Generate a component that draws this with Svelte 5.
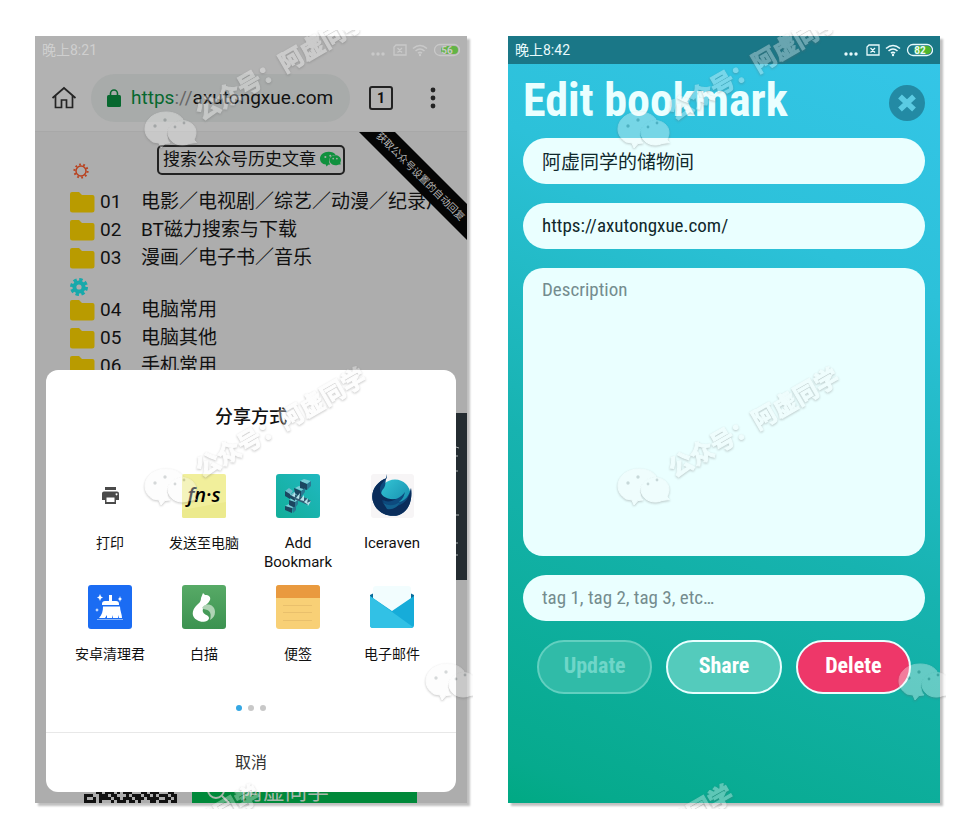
<script>
  const topFolders = [
    { no: '01', name: '电影／电视剧／综艺／动漫／纪录片' },
    { no: '02', name: 'BT磁力搜索与下载' },
    { no: '03', name: '漫画／电子书／音乐' }
  ];
  const moreFolders = [
    { no: '04', name: '电脑常用' },
    { no: '05', name: '电脑其他' },
    { no: '06', name: '手机常用' }
  ];
  const apps = [
    { id: 'print', label: '打印' },
    { id: 'fns', label: '发送至电脑' },
    { id: 'add', label: 'Add Bookmark', latin: true },
    { id: 'raven', label: 'Iceraven', latin: true },
    { id: 'clean', label: '安卓清理君' },
    { id: 'baimiao', label: '白描' },
    { id: 'notes', label: '便签' },
    { id: 'mail', label: '电子邮件' }
  ];

  const qrRows = [
    '0110111011011001110101110110110',
    '1111001000111101101011001111011',
    '0000110111010111000110111000110',
    '1110011101100010111011010111011',
    '1001011110110111011101111001101',
    '1111010001011101101000110111011'
  ];
  const modules = qrRows.flatMap((row, y) =>
    [...row].map((v, x) => ({ v, x: x * 3, y: y * 3 })).filter((m) => m.v === '1')
  );

  const marks = [
    { x: 116, y: 82 },
    { x: 116, y: 439 },
    { x: 397, y: 634 },
    { x: 10, y: 856 }
  ];

  let title = $state('阿虚同学的储物间');
  let url = $state('https://axutongxue.com/');
  let description = $state('');
  let tags = $state('');
</script>

{#snippet folder(item)}
  <li>
    <a class="folder" href="#folder-{item.no}">
      <svg width="25" height="21" viewBox="0 0 25 21" aria-hidden="true">
        <path d="M2 0h7l3 3h10.500a2 2 0 0 1 2 2v13a2.500 2.500 0 0 1-2.500 2.500H2.500A2.500 2.500 0 0 1 0 18V2a2 2 0 0 1 2-2z" fill="#b99b00" />
      </svg>
      <span class="no">{item.no}</span>
      <span class="name">{item.name}</span>
    </a>
  </li>
{/snippet}

{#snippet statusIcons(level)}
  <svg class="status-icons" width="89" height="14" viewBox="0 0 89 14" aria-hidden="true">
    <g fill="currentColor">
      <circle cx="2" cy="11" r="1.700" /><circle cx="7" cy="11" r="1.700" /><circle cx="12" cy="11" r="1.700" />
    </g>
    <g fill="none" stroke="currentColor" stroke-width="1.300">
      <path d="M25 2h10v10H23V4zM26.500 5l4.500 4.500M31 5l-4.500 4.500" />
      <path d="M42 5.500q7-6 14 0M44.500 8q4.500-4 9 0M47 10.200q2-1.800 4 0" stroke-width="1.600" />
      <rect x="63.500" y="1.500" width="25" height="11" rx="5.500" />
    </g>
    <rect x="70" y="3" width="17" height="8" rx="4" fill="#4fb52c" />
    <circle cx="49" cy="12" r="1.200" fill="currentColor" />
    <text x="76" y="10.500" text-anchor="middle" font-size="10" font-weight="700" fill="currentColor">{level}</text>
  </svg>
{/snippet}

{#snippet chatLogo()}
  <path d="M21 0C9 0 0 7.500 0 17c0 6 3.500 10 8 13l6 1 2 5 4-4.500 5-.5C19 25 21 9 38 7.500 35 3 29 0 21 0z" />
  <path d="M51 20.500c0-7-6.500-12-14-12S23 14 23 20.500 29 33 37 33c2.500 0 5-.5 7-1.500l7.500-1-2.500-2.500c1-2.500 2-4.500 2-7.500z" />
{/snippet}

{#snippet watermark()}
  <svg class="watermark" aria-hidden="true">
    <g class="stamp">
      {#each marks as m}
        <g transform="translate({m.x} {m.y})">
          {@render chatLogo()}
          <g fill="#8b9396" stroke="none">
            <circle cx="10" cy="14" r="1.700" /><circle cx="20" cy="8" r="1.700" />
            <circle cx="30" cy="15" r="1.400" /><circle cx="39" cy="11" r="1.400" />
          </g>
          <text x="57" y="9" transform="rotate(-30 57 9)">公众号：阿虚同学</text>
        </g>
      {/each}
    </g>
  </svg>
{/snippet}

{#snippet appIcon(id)}
  <svg width="44" height="44" viewBox="0 0 44 44" aria-hidden="true">
    {#if id === 'print'}
      <path d="M17 16h11v-3H17zM16 17.500h13a2 2 0 0 1 2 2v6.500h-3v4H17v-4h-3v-6.500a2 2 0 0 1 2-2zM18.500 23.500v4.500h8v-4.500zM28.500 19.300a1 1 0 1 0 .1 0z" fill="#4a4a4a" fill-rule="evenodd" />
    {:else if id === 'fns'}
      <rect width="44" height="44" rx="2" fill="#f1ef9b" />
      <path d="M0 36l44-8v14a2 2 0 0 1-2 2H2a2 2 0 0 1-2-2z" fill="#ecea8d" />
      <text x="22" y="28" text-anchor="middle" class="hand">fn·s</text>
    {:else if id === 'add'}
      <defs><linearGradient id="teal" x1="0" y1="1" x2="1" y2="0"><stop stop-color="#12ae99" /><stop offset="1" stop-color="#20b8c0" /></linearGradient></defs>
      <rect width="44" height="44" rx="3" fill="url(#teal)" />
      <path d="M24 7l4-2 7 2-4 3zM19 14l4-2 6 2-3 3zM13 26l4-2 6 2-4 3zM9 32l4-2 6 2-3 3z" fill="#79cdd6" />
      <path d="M24 7l7 3v6l-7-2zM18 14l7 3v6l-6-3zM13 26l6 2v6l-6-3zM9 32l7 2v5l-7-3z" fill="#1b4660" />
      <path d="M31 10l4-3v5l-4 4zM25 17l4-3v4l-4 5zM16 34l4-2v4l-3 3zM19 28l3-2v4l-3 4z" fill="#2a7892" />
      <path d="M9 17l4-3 4 3-3 4zM14 21l4-3 3 3-3 4z" fill="#6fb9c8" />
      <path d="M9 17l5 3v5l-5-3zM14 21l5 2v4l-5-3z" fill="#1b4660" />
      <path d="M17 20l13 4 5 3-3 4-14-6z" fill="#315d75" />
      <path d="M16 22l3-4v5zM20 24l4-5-1 6zM24 26l4-5v6zM28 28l4-4-1 6zM31 29l4-2-3 5z" fill="#b5e5ec" />
    {:else if id === 'raven'}
      <defs><linearGradient id="ice" x1="0" y1="0" x2="1" y2="1"><stop stop-color="#35c7d6" /><stop offset="1" stop-color="#1184a7" /></linearGradient></defs>
      <rect x="1" width="43" height="44" rx="3" fill="#f7f5f6" />
      <circle cx="25" cy="21" r="15.500" fill="url(#ice)" />
      <path d="M17 4C5 8-1 20 4 30c4 9 15 14 25 11 8-3 14-12 12-27-2 8-6 13-12 14 4-3 5-6 6-10-4 6-10 8-20 9-5-3-5-9-1-13 2-3 1-6 3-14z" fill="#0d4a7e" />
      <path d="M17 4C5 8-1 20 4 30c4 9 15 14 25 11 8-3 14-12 12-27-1 9-6 16-14 18-8 2-12-2-15-6 4 2 10 2 14-1-9 1-16-3-16-10 0-4 3-7 7-11z" fill="#0a2d5b" />
      <path d="M12 27c5 6 12 5 18 1-2 5-7 8-13 7z" fill="#12608f" />
    {:else if id === 'clean'}
      <rect width="44" height="44" rx="3" fill="#1b6cf3" />
      <path d="M21 10h3v6h4q3 0 3 3v1H14v-1q0-3 3-3h4zM15 21.500h17c0 4 2 8 2 11.500h-3l-1-3v3h-5l-1-3v3h-5v-3l-2 3h-6c3-3 4-7 4-11.500zM12 9l1 2.500 2 1-2 1-1 2.500-1-2.500-2-1 2-1zM32 11l.6 2 1.400 1-1.400 1-.6 2-.6-2-1.400-1 1.400-1zM9 23l.6 1.400 1.400.6-1.400.6L9 27l-.6-1.400L7 25l1.400-.6z" fill="#fff" />
      <path d="M9 34.500h26" stroke="#8bb6fb" />
    {:else if id === 'baimiao'}
      <defs><linearGradient id="leaf" x1="0" y1="0" x2="0" y2="1"><stop stop-color="#57aa66" /><stop offset="1" stop-color="#3c9250" /></linearGradient></defs>
      <rect width="44" height="44" rx="3" fill="url(#leaf)" />
      <path d="M19 13l2-5 2 2c4 0 6 2 5 5-1 2-2 3-3 4-3 3-5 5-4 8 1 3 6 3 6 6 0 4-8 5-12 2-6-3-5-10-1-14 3-3 5-4 5-8z" fill="#fff" />
      <path d="M20 23c3-6 13-4 13 4 0 4-2 6-5 8 1-4 1-7-1-9s-5-1-7-3z" fill="#afd4b5" />
    {:else if id === 'notes'}
      <rect width="44" height="44" rx="3" fill="#f8d076" />
      <path d="M3 0h38a3 3 0 0 1 3 3v10H0V3a3 3 0 0 1 3-3z" fill="#e99a3f" />
      <path d="M7 20.500h29M7 27.500h29M7 35.500h29" stroke="#e9c06c" />
    {:else}
      <path d="M0 10l4-2h36l4 2v8H0z" fill="#096b9a" />
      <rect x="3" y="1" width="38" height="30" rx="3" fill="#f2fdfe" />
      <path d="M0 11l22 15L44 11v29a3 3 0 0 1-3 3H3a3 3 0 0 1-3-3z" fill="#16acd9" />
      <path d="M0 11l43 31-2 1H3a3 3 0 0 1-3-3z" fill="#32c1e5" />
    {/if}
  </svg>
{/snippet}

<main>
  <section class="phone" aria-label="分享方式">
    <div class="screen browser">
      <header>
        <div class="status dim"><span>晚上8:21</span>{@render statusIcons('56')}</div>
        <div class="toolbar">
          <button class="plain" aria-label="主页">
            <svg width="26" height="24" viewBox="0 0 26 24" fill="none" stroke="#242424" stroke-width="1.700"><path d="M1.500 12L13 2l11.500 10M4.500 10v11.500h6V14h5v7.500h6V10" /></svg>
          </button>
          <button class="address">
            <svg width="14" height="18" viewBox="0 0 14 18" aria-hidden="true"><rect y="6" width="14" height="12" rx="1.500" fill="#07682f" /><path d="M3.500 7V4.500a3.500 3.500 0 0 1 7 0V7" fill="none" stroke="#07682f" stroke-width="1.600" /></svg>
            <span><span class="secure">https</span><span class="slashes">://</span>axutongxue.com</span>
          </button>
          <button class="tabs" aria-label="标签页">1</button>
          <button class="plain kebab" aria-label="菜单">
            <svg width="6" height="22" viewBox="0 0 6 22" fill="#222"><circle cx="3" cy="3" r="2.400" /><circle cx="3" cy="11" r="2.400" /><circle cx="3" cy="19" r="2.400" /></svg>
          </button>
        </div>
      </header>

      <div class="page">
        <div class="page-head">
          <svg class="sun" width="16" height="16" viewBox="0 0 16 16" aria-hidden="true">
            <circle cx="8" cy="8" r="5" fill="none" stroke="#b9421f" stroke-width="1.500" />
            <circle cx="8" cy="8" r="6.600" fill="none" stroke="#b9421f" stroke-width="2" stroke-dasharray="1.800 2.346" />
          </svg>
          <a class="search" href="#search">
            搜索公众号历史文章
            <svg width="21" height="17" viewBox="0 0 51 38" aria-hidden="true">
              <g fill="#10913e">{@render chatLogo()}</g>
              <g fill="#adadad"><circle cx="13" cy="13" r="2.500" /><circle cx="25" cy="10" r="2.500" /><circle cx="32" cy="17" r="2" /><circle cx="41" cy="17" r="2" /></g>
            </svg>
          </a>
        </div>
        <ul>{#each topFolders as item}{@render folder(item)}{/each}</ul>
        <svg class="gear" width="18" height="18" viewBox="0 0 18 18" aria-hidden="true">
          <circle cx="9" cy="9" r="4.600" fill="none" stroke="#17a9ab" stroke-width="4" />
          <circle cx="9" cy="9" r="7.500" fill="none" stroke="#17a9ab" stroke-width="3" stroke-dasharray="3.400 2.490" />
        </svg>
        <ul>{#each moreFolders as item}{@render folder(item)}{/each}</ul>

        <a class="ribbon" href="#auto-reply">
          <svg width="108" height="108" viewBox="0 0 108 108">
            <path d="M0 0h36l72 72v36z" fill="#050505" />
            <text x="62" y="48" transform="rotate(45 62 44)" text-anchor="middle" font-size="10" fill="#b5b5b5">获取公众号设置的自动回复</text>
          </svg>
        </a>
      </div>

      <div class="page-foot">
        <svg width="93" height="18" viewBox="0 0 93 18" aria-hidden="true">
          {#each modules as m}<rect x={m.x} y={m.y} width="3" height="3" fill="#111" />{/each}
        </svg>
        <div class="promo">
          <svg width="24" height="24" viewBox="0 0 24 24" fill="none" stroke="#a9b8ac" stroke-width="2" aria-hidden="true"><circle cx="10" cy="10" r="8" /><path d="M16 16l7 7" /></svg>
          阿虚同学
        </div>
      </div>

      <div class="side-panel">
        <svg width="11" height="167" viewBox="0 0 11 167" stroke="#aab0b2" aria-hidden="true"><path d="M0 34l3 1M0 43h2M0 58h2M0 102h3M0 130h2M0 142h2" /></svg>
      </div>

      <div class="sheet" role="dialog" aria-label="分享方式">
        <h2>分享方式</h2>
        <div class="apps">
          {#each apps as app}
            <button class="app">
              {@render appIcon(app.id)}
              <span class:latin={app.latin}>{app.label}</span>
            </button>
          {/each}
        </div>
        <div class="dots"><i class="on"></i><i></i><i></i></div>
        <button class="cancel">取消</button>
      </div>
    </div>
    {@render watermark()}
  </section>

  <section class="phone" aria-label="Edit bookmark">
    <div class="screen editor">
      <div class="status bar"><span>晚上8:42</span>{@render statusIcons('82')}</div>
      <form onsubmit={(e) => e.preventDefault()}>
        <div class="heading">
          <h1>Edit bookmark</h1>
          <button type="button" class="close" aria-label="Close">
            <svg width="36" height="36" viewBox="0 0 36 36"><circle cx="18" cy="18" r="18" fill="#238aa4" /><path d="M11 11.500l14 13M25 11.500l-14 13" stroke="#5bcbe2" stroke-width="5.500" /></svg>
          </button>
        </div>
        <input type="text" aria-label="Title" bind:value={title} />
        <input type="text" aria-label="URL" bind:value={url} />
        <textarea aria-label="Description" placeholder="Description" bind:value={description}></textarea>
        <input type="text" aria-label="Tags" placeholder="tag 1, tag 2, tag 3, etc…" bind:value={tags} />
        <div class="actions">
          <button type="submit" disabled>Update</button>
          <button type="button" class="share">Share</button>
          <button type="button" class="delete">Delete</button>
        </div>
      </form>
    </div>
    {@render watermark()}
  </section>
</main>

<style>
  :global(body) { margin: 0; background: #fff; }
  * { box-sizing: border-box; }
  button, input, textarea { font: inherit; color: inherit; margin: 0; }
  button { border: 0; background: none; padding: 0; cursor: pointer; }
  a { color: inherit; text-decoration: none; }
  svg { display: block; flex: none; }

  main {
    display: grid;
    grid-template-columns: 1fr 1fr;
    gap: 41px;
    min-height: 100vh;
    padding: 36px 36px 36px 35px;
    font-family: Roboto, "Noto Sans CJK SC", sans-serif;
  }
  .phone { position: relative; display: flex; min-width: 0; }
  .screen {
    position: relative;
    flex: 1;
    min-width: 0;
    display: flex;
    flex-direction: column;
    overflow: hidden;
  }
  .phone::before {
    content: "";
    position: absolute;
    inset: 0;
    box-shadow: 3px 3px 2px rgba(0, 0, 0, 0.25);
  }

  .status {
    display: flex;
    align-items: center;
    justify-content: space-between;
    height: 28px;
    padding: 0 7px;
    font-size: 14px;
    line-height: 28px;
    color: #e8fafc;
  }
  .status.dim { color: #cfcfcf; }
  .status.dim .status-icons { opacity: 0.8; }
  .status.bar { background: #1a7787; }

  /* browser */
  .browser { background: #adadad; color: #111; }
  header { background: #b2b2b2; border-bottom: 1px solid #a8a8a8; }
  .toolbar {
    display: flex;
    align-items: center;
    height: 67px;
    padding: 0 31px 0 16px;
  }
  .address {
    flex: 1;
    display: flex;
    align-items: center;
    gap: 10px;
    height: 48px;
    margin: 0 19px 0 14px;
    padding-left: 16px;
    border-radius: 24px;
    background: #a8abaa;
    font-size: 19px;
    white-space: nowrap;
  }
  .secure { color: #07682f; }
  .slashes { color: #666; }
  .tabs {
    width: 24px;
    height: 24px;
    border: 2px solid #222;
    border-radius: 3px;
    font-size: 14px;
    font-weight: 700;
    line-height: 20px;
  }
  .kebab { margin-left: 37px; }

  .page { position: relative; padding-left: 35px; font-size: 19px; }
  .page-head {
    display: flex;
    align-items: flex-start;
    height: 56px;
    padding: 13px 0 0 3px;
  }
  .sun { margin-top: 18px; }
  .search {
    display: flex;
    align-items: center;
    gap: 4px;
    height: 30px;
    margin-left: 68px;
    padding: 0 2px 2px 4px;
    border: 2px solid #222;
    border-radius: 5px;
    font-size: 17px;
    line-height: 22px;
    white-space: nowrap;
  }
  ul { margin: 0; padding: 0; list-style: none; }
  .folder {
    display: flex;
    align-items: center;
    height: 28px;
    line-height: 28px;
    white-space: nowrap;
  }
  .no { width: 41px; margin-left: 5px; }
  .gear { margin: 6px 0 0; }
  .ribbon { position: absolute; top: 0; right: 0; }

  .page-foot {
    display: flex;
    align-items: flex-end;
    gap: 15px;
    margin-top: auto;
    padding: 0 50px 0 49px;
  }
  .promo {
    flex: 1;
    display: flex;
    align-items: center;
    gap: 11px;
    height: 22px;
    padding-left: 14px;
    background: #00893a;
    color: #a9b8ac;
    font-size: 22px;
    line-height: 22px;
  }
  .side-panel {
    position: absolute;
    right: 0;
    bottom: 223px;
    background: #242c31;
  }

  .sheet {
    position: absolute;
    left: 11px;
    right: 11px;
    bottom: 11px;
    border-radius: 12px;
    background: #fff;
    overflow: hidden;
  }
  h2 {
    margin: 0;
    padding: 35px 0 45px;
    font-size: 18px;
    font-weight: 500;
    line-height: 24px;
    text-align: center;
  }
  .apps {
    display: grid;
    grid-template-columns: repeat(4, 1fr);
    gap: 13px 0;
    padding: 0 17px;
  }
  .app {
    display: flex;
    flex-direction: column;
    align-items: center;
    gap: 16px;
    font-size: 14px;
    line-height: 19px;
  }
  .app .latin { font-size: 15px; }
  .hand { font: italic 600 20px "Open Sans", sans-serif; }
  .dots {
    display: flex;
    justify-content: center;
    gap: 6px;
    padding: 41px 0 21px;
  }
  .dots i { width: 6px; height: 6px; border-radius: 50%; background: #c8c8c8; }
  .dots .on { background: #35a7e3; }
  .cancel {
    display: block;
    width: 100%;
    height: 60px;
    padding-bottom: 3px;
    border-top: 1px solid #e8e8e8;
    font-size: 16px;
    color: #333;
  }

  /* editor */
  .editor {
    background: linear-gradient(202deg, #35c6e9 0%, #2cc1d9 28%, #17b3b0 60%, #06aa8d 95%, #00a983 100%);
    color: #10282c;
    font-family: "Roboto Condensed", "Liberation Sans Narrow", "Noto Sans CJK SC", sans-serif;
  }
  .status.bar { font-family: Roboto, "Noto Sans CJK SC", sans-serif; }
  form {
    display: flex;
    flex-direction: column;
    gap: 19px;
    padding: 0 15px;
  }
  .heading {
    display: flex;
    align-items: flex-end;
    justify-content: space-between;
    height: 57px;
    margin-bottom: -2px;
  }
  h1 {
    margin: 0;
    font-size: 46px;
    line-height: 42px;
    color: #eaffff;
    white-space: nowrap;
  }
  input, textarea {
    width: 100%;
    border: 0;
    outline: 0;
    background: #eaffff;
    font-size: 19px;
    padding: 0 19px;
  }
  input { height: 46px; padding-bottom: 2px; border-radius: 23px; }
  textarea {
    display: block;
    height: 288px;
    padding-top: 10px;
    border-radius: 20px;
    resize: none;
  }
  input::placeholder, textarea::placeholder { color: #748c8e; opacity: 1; }
  .actions { display: flex; gap: 14px; padding: 0 14px; }
  .actions button {
    flex: 1;
    height: 54px;
    padding-bottom: 3px;
    border: 2px solid #eaffff;
    border-radius: 27px;
    font-size: 22px;
    font-weight: 700;
    color: #fff;
  }
  .actions button:disabled { border-color: #62d0c0; background: #30bba8; color: #6fd6c8; }
  .actions .share { background: #54cbbc; }
  .actions .delete { background: #ee3769; }

  .watermark {
    position: absolute;
    top: -6px;
    left: -6px;
    width: calc(100% + 12px);
    height: calc(100% + 12px);
    overflow: hidden;
    pointer-events: none;
  }
  .stamp {
    fill: #fafafa;
    stroke: #fafafa;
    stroke-width: 1;
    opacity: 0.36;
    filter: drop-shadow(0 1px 1px #666);
    font-size: 24px;
    font-weight: 700;
  }
</style>
